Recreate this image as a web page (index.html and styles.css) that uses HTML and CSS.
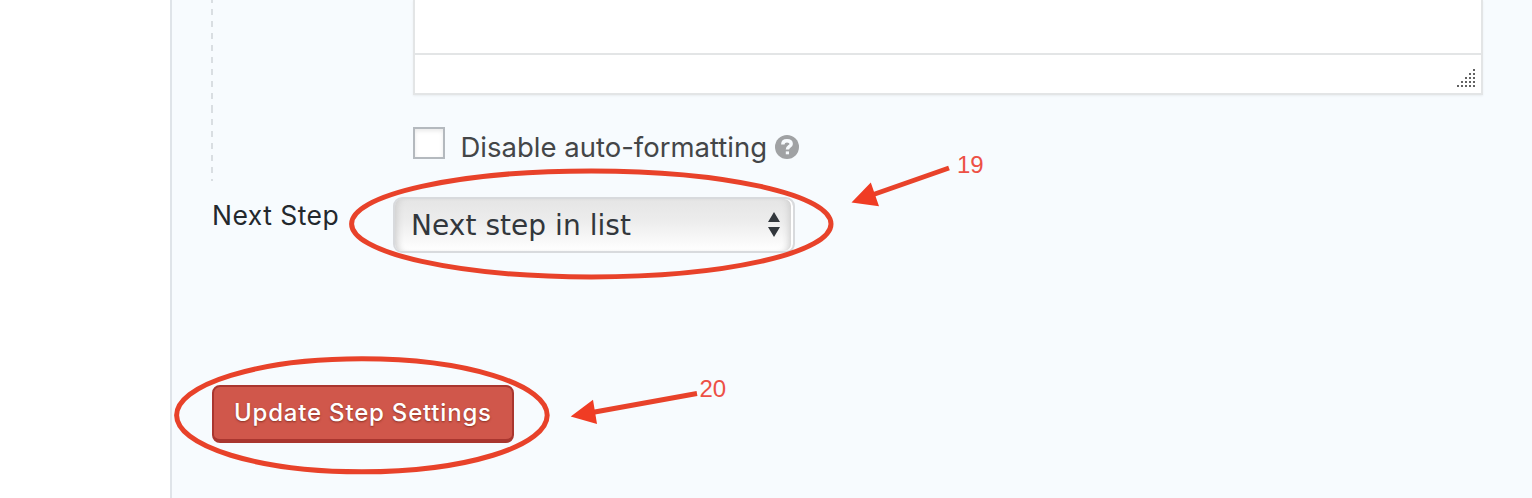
FILE: index.html
```html
<!DOCTYPE html>
<html lang="en">
<head>
<meta charset="utf-8">
<title>Step Settings</title>
<link rel="stylesheet" href="styles.css">
</head>
<body>
<main class="panel">
  <section class="settings">
    <div class="editor">
      <div class="editor-body"></div>
      <div class="editor-status">
        <svg class="resizer" width="18" height="18" viewBox="0 0 18 18"><path d="M16 0h2v2h-2zM12 4h2v2h-2zM16 4h2v2h-2zM8 8h2v2H8zM12 8h2v2h-2zM16 8h2v2h-2zM4 12h2v2H4zM8 12h2v2H8zM12 12h2v2h-2zM16 12h2v2h-2zM0 16h2v2H0zM4 16h2v2H4zM8 16h2v2H8zM12 16h2v2h-2zM16 16h2v2h-2z"/></svg>
      </div>
    </div>
    <div class="option">
      <span class="checkbox"></span>
      <span class="option-label">Disable auto-formatting</span>
      <svg class="help" width="24" height="24" viewBox="0 0 24 24"><circle cx="12" cy="12" r="12"/><path d="M7.800 9.400C7.800 6.700 9.700 5.700 12 5.700s4.200 1.100 4.200 3.200c0 2.600-3.800 2.600-3.800 5.600"/><path d="M10.800 16.400h3.200v2.900h-3.200z" class="help-dot"/></svg>
    </div>
  </section>
  <div class="next-step">
    <span class="next-label">Next Step</span>
    <div class="select">
      <span class="select-value">Next step in list</span>
      <svg class="select-arrows" width="12" height="26" viewBox="0 0 12 26"><path d="M6 0l6 10H0zM0 15h12L6 25z"/></svg>
    </div>
  </div>
  <button class="update" type="button"><span class="update-text">Update Step Settings</span></button>
</main>
<svg class="annotations" width="1532" height="498" viewBox="0 0 1532 498">
  <g class="mark-lines">
    <ellipse cx="591.3" cy="223.900" rx="239.700" ry="53"/>
    <ellipse cx="361.900" cy="415.300" rx="185.300" ry="56.500"/>
    <path d="M949 168L872 195M697 393.500L592 412.500"/>
  </g>
  <path class="mark-heads" d="M851.500 202.600L870.800 182.500L879 206.200zM570.700 416.400L593 399.700L597 424z"/>
  <text class="mark-number" x="957" y="173">19</text>
  <text class="mark-number" x="699.500" y="397">20</text>
</svg>
</body>
</html>
```
FILE: styles.css
```css
* { box-sizing: border-box; }
body {
  margin: 0;
  height: 498px;
  overflow: hidden;
  background: #fff;
  font-family: Inter, "Liberation Sans", sans-serif;
}
.panel {
  margin-left: 170px;
  height: 498px;
  padding-left: 39px;
  border-left: 2px solid #dfe4e9;
  background: #f7fbfe;
}
.settings {
  height: 181px;
  padding-left: 202px;
  background:
    repeating-linear-gradient(to bottom, #d9dee2 0 3px, transparent 3px 9px, #d9dee2 9px 12px) 0 0 / 2px 109px no-repeat,
    repeating-linear-gradient(to bottom, #d9dee2 0 4px, transparent 4px 10px, #d9dee2 10px 12px) 0 109px / 2px 72px no-repeat;
}
.editor {
  width: 1070px;
  height: 95px;
  border: 2px solid #e3e5e6;
  border-top: 0;
  background: #fff;
  box-shadow: 0 1px 2px rgba(0, 0, 0, .06);
}
.editor-body { height: 53px; }
.editor-status {
  height: 40px;
  display: flex;
  justify-content: flex-end;
  padding: 14px 6px 0 0;
  border-top: 2px solid #e3e5e6;
}
.resizer { fill: #626262; }
.option {
  display: flex;
  align-items: flex-start;
  padding-top: 32px;
}
.checkbox {
  width: 32px;
  height: 32px;
  border: 2px solid #b4b9be;
  background: #fff;
  box-shadow: inset 0 2px 4px rgba(0, 0, 0, .09);
}
.option-label {
  width: 330px;
  padding-left: 15.5px;
  color: #444648;
  font-size: 27.5px;
  line-height: 40px;
  white-space: nowrap;
}
.help { margin-top: 8px; fill: #a0a2a4; }
.help path { fill: none; stroke: #f7fbfe; stroke-width: 3.400px; }
.help .help-dot { fill: #f7fbfe; stroke: none; }
.next-step {
  display: flex;
  padding-top: 16px;
}
.next-label {
  width: 182px;
  padding-left: 1px;
  color: #23282d;
  font-size: 26.5px;
  line-height: 36px;
  letter-spacing: .45px;
  white-space: nowrap;
}
.select {
  width: 402px;
  height: 56px;
  display: flex;
  justify-content: space-between;
  padding: 0 15px 0 16px;
  border: 2px solid #d8dadd;
  border-radius: 9px;
  background: linear-gradient(#e5e5e5, #ececec 40%, #fff);
  box-shadow: inset -2px 0 0 0 #fff, inset 7px 0 7px -5px #cdcdcd, inset -9px 0 7px -5px #cdcdcd;
}
.select-value {
  color: #32373c;
  font-family: "DejaVu Sans", sans-serif;
  font-size: 28px;
  line-height: 53px;
  letter-spacing: .05px;
  white-space: nowrap;
}
.select-arrows { margin: 12.500px -1.500px 0 0; fill: #32373c; }
.update {
  display: block;
  width: 302px;
  height: 58px;
  margin: 132px 0 0 1px;
  padding: 0 0 0 20px;
  border: 2px solid #a9362f;
  border-bottom-width: 4px;
  border-radius: 8px;
  background: #d0574b;
  color: #fff;
  font: 500 24px/50px Inter, sans-serif;
  text-align: left;
  text-shadow: 0 1px 2px rgba(100, 30, 15, .65);
  white-space: nowrap;
}
.update-text { letter-spacing: .8px; }
.annotations {
  position: absolute;
  top: 0;
  left: 0;
}
.mark-lines { fill: none; stroke: #e8422a; stroke-width: 5px; }
.mark-heads { fill: #f03c24; }
.mark-number {
  fill: #ed5045;
  font-family: "Liberation Sans", Arial, sans-serif;
  font-size: 24px;
}
```
